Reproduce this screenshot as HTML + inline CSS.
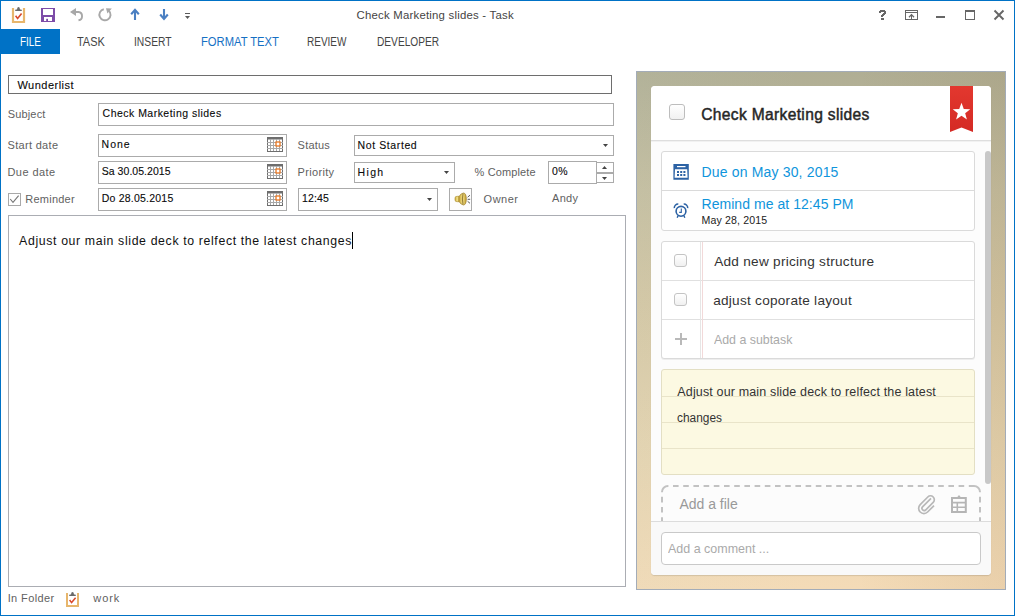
<!DOCTYPE html>
<html><head><meta charset="utf-8"><style>
html,body{margin:0;padding:0;}
body{width:1015px;height:616px;overflow:hidden;position:relative;background:#fff;font-family:'Liberation Sans',sans-serif;}
.a{position:absolute;box-sizing:border-box;}
.t{position:absolute;white-space:pre;}
svg{position:absolute;overflow:visible;}
</style></head><body>
<!-- window frame -->
<div class="a" style="left:0;top:0;width:1015px;height:616px;border:1px solid #0072c6;"></div>
<!-- FILE tab -->
<div class="a" style="left:0;top:29px;width:60px;height:25px;background:#0072c6;"></div>
<!-- form boxes -->
<div class="a" style="left:8px;top:75px;width:604px;height:19px;border:1px solid #6e6e6e;"></div>
<div class="a" style="left:98px;top:103px;width:516px;height:23px;border:1px solid #ababab;"></div>
<div class="a" style="left:98px;top:134px;width:189px;height:23px;border:1px solid #ababab;"></div>
<div class="a" style="left:98px;top:161px;width:189px;height:23px;border:1px solid #ababab;"></div>
<div class="a" style="left:98px;top:188px;width:189px;height:23px;border:1px solid #ababab;"></div>
<div class="a" style="left:354px;top:135px;width:260px;height:21px;border:1px solid #ababab;"></div>
<div class="a" style="left:354px;top:162px;width:101px;height:21px;border:1px solid #ababab;"></div>
<div class="a" style="left:548px;top:161px;width:49px;height:23px;border:1px solid #ababab;"></div>
<div class="a" style="left:596px;top:162px;width:18px;height:11px;border:1px solid #ababab;"></div>
<div class="a" style="left:596px;top:173px;width:18px;height:10px;border:1px solid #ababab;"></div>
<div class="a" style="left:298px;top:188px;width:140px;height:23px;border:1px solid #ababab;"></div>
<div class="a" style="left:449px;top:188px;width:23px;height:23px;border:1px solid #ababab;background:#fdfdfd;"></div>
<div class="a" style="left:8px;top:193px;width:13px;height:13px;border:1px solid #a9a9a9;"></div>
<div class="a" style="left:8px;top:215px;width:618px;height:372px;border:1px solid #abadb3;"></div>
<!-- cursor -->
<div class="a" style="left:352px;top:232px;width:1px;height:17px;background:#000;"></div>

<!-- Wunderlist panel -->
<div class="a" style="left:636px;top:71px;width:370px;height:519px;border:1px solid #a3acb8;background:linear-gradient(90deg,rgba(200,215,200,0.10) 0%,rgba(200,215,200,0) 45%,rgba(120,80,30,0) 60%,rgba(120,80,30,0.08) 100%),linear-gradient(180deg,#b0ae94 0%,#c4bd9f 23%,#d4c6a3 45%,#e5d3af 72%,#f4dbb7 100%);"></div>
<div class="a" style="left:651px;top:86px;width:340px;height:489px;background:#fcfcfc;border-radius:4px;box-shadow:0 1px 1px rgba(0,0,0,0.12);"></div>
<div class="a" style="left:651px;top:86px;width:340px;height:54px;background:#fff;border-radius:4px 4px 0 0;"></div>
<div class="a" style="left:651px;top:140px;width:340px;height:1px;background:#dedede;"></div>
<div class="a" style="left:651px;top:141px;width:340px;height:1px;background:#f1f1f1;"></div>
<!-- title checkbox -->
<div class="a" style="left:669px;top:104px;width:16px;height:16px;border:1px solid #bdbdbd;border-radius:3px;background:linear-gradient(#fff,#f1f1f1);"></div>
<!-- due box -->
<div class="a" style="left:661px;top:151px;width:314px;height:80px;border:1px solid #dadada;border-radius:3px;background:#fff;"></div>
<div class="a" style="left:662px;top:190px;width:312px;height:1px;background:#dadada;"></div>
<!-- subtasks -->
<div class="a" style="left:661px;top:241px;width:314px;height:118px;border:1px solid #dadada;border-radius:3px;background:#fff;box-shadow:0 1px 0 rgba(0,0,0,0.06);"></div>
<div class="a" style="left:662px;top:280px;width:312px;height:1px;background:#e0e0e0;"></div>
<div class="a" style="left:662px;top:319px;width:312px;height:1px;background:#e0e0e0;"></div>
<div class="a" style="left:700px;top:242px;width:1px;height:116px;background:#e6e6e6;"></div>
<div class="a" style="left:702px;top:242px;width:1px;height:116px;background:#f2d9d9;"></div>
<div class="a" style="left:674px;top:254px;width:13px;height:13px;border:1px solid #c4c4c4;border-radius:3px;background:linear-gradient(#fff,#f0f0f0);"></div>
<div class="a" style="left:674px;top:293px;width:13px;height:13px;border:1px solid #c4c4c4;border-radius:3px;background:linear-gradient(#fff,#f0f0f0);"></div>
<div class="a" style="left:680px;top:333px;width:2px;height:12px;background:#b9b9b9;"></div>
<div class="a" style="left:675px;top:338px;width:12px;height:2px;background:#b9b9b9;"></div>
<!-- note -->
<div class="a" style="left:661px;top:369px;width:314px;height:106px;border:1px solid #e3dfc4;border-radius:3px;background:#fcf9e2;"></div>
<div class="a" style="left:662px;top:396px;width:312px;height:1px;background:#e9e4c9;"></div>
<div class="a" style="left:662px;top:422px;width:312px;height:1px;background:#e9e4c9;"></div>
<div class="a" style="left:662px;top:448px;width:312px;height:1px;background:#e9e4c9;"></div>
<!-- scrollbar -->
<div class="a" style="left:985px;top:151px;width:6px;height:333px;background:#c8c8c8;border-radius:3px;"></div>
<!-- dashed file box -->
<svg style="left:0;top:0" width="1015" height="616" viewBox="0 0 1015 616">
<path d="M662 492 A6 6 0 0 1 668 486 M974 486 A6 6 0 0 1 980 492" fill="none" stroke="#c2c2c2" stroke-width="2"/>
<path d="M668 486 H974" fill="none" stroke="#c2c2c2" stroke-width="2" stroke-dasharray="5.6 4.6" stroke-dashoffset="5.2"/>
<path d="M662 492 V530 M980 492 V530" fill="none" stroke="#c2c2c2" stroke-width="2" stroke-dasharray="5.6 4.6" stroke-dashoffset="5.4"/>
</svg>
<!-- footer -->
<div class="a" style="left:651px;top:521px;width:340px;height:54px;background:#f9f9f9;border-top:1px solid #dcdcdc;border-radius:0 0 4px 4px;"></div>
<div class="a" style="left:661px;top:532px;width:320px;height:33px;border:1px solid #c9c9c9;border-radius:4px;background:#fff;"></div>
<svg style="left:0;top:0" width="1015" height="616" viewBox="0 0 1015 616">
<!-- title clipboard -->
<path d="M13 8 V22 H24 V8" fill="none" stroke="#e7b66c" stroke-width="2.2"/>
<path d="M15 11 L15.6 9.4 H17 Q17.2 7 18.5 7 Q19.8 7 20 9.4 H21.4 L22 11 Z" fill="#6a6a6a"/>
<path d="M15.6 15.8 L17.6 18.4 L21.6 13.4" fill="none" stroke="#d8492c" stroke-width="1.6"/>
<!-- save -->
<path d="M41 8 H55 V22 H41 Z M43 9 V15 H53 V9 Z M44 17 V21 H52 V17 Z" fill="#7d4ca8" fill-rule="evenodd"/>
<rect x="46.2" y="18.8" width="1.8" height="2.5" fill="#7d4ca8"/>
<!-- undo -->
<path d="M71.5 12 H78.5 A4.2 4.2 0 0 1 78.5 20.3" fill="none" stroke="#a8a8a8" stroke-width="1.9"/>
<path d="M70 12 L76 8 V16 Z" fill="#a8a8a8"/>
<!-- redo -->
<path d="M103.8 9.2 A5.6 5.6 0 1 0 108.8 10.6" fill="none" stroke="#a8a8a8" stroke-width="1.9"/>
<path d="M106 8.2 L111.8 8.6 L107.4 13.6 Z" fill="#a8a8a8"/>
<!-- up -->
<path d="M135 10 V20" stroke="#4a7fc2" stroke-width="2.1"/>
<path d="M131.2 14.2 L135 9.8 L138.8 14.2" fill="none" stroke="#4a7fc2" stroke-width="2.1"/>
<!-- down -->
<path d="M164 9 V19" stroke="#4a7fc2" stroke-width="2.1"/>
<path d="M160.2 14.5 L164 18.9 L167.8 14.5" fill="none" stroke="#4a7fc2" stroke-width="2.1"/>
<!-- customize -->
<rect x="185" y="13" width="5" height="1" fill="#5a5a5a"/>
<path d="M185 16 H190 L187.5 19 Z" fill="#5a5a5a"/>
<!-- help ? -->
<path d="M880 10 H885 V11 H886 V14 H885 V15 H884 V16 H883 V17 H881 V15 H882 V14 H883 V13 H884 V12 H881 V13 H879 V11 H880 Z" fill="#666"/>
<rect x="881" y="18" width="3" height="2" fill="#666"/>
<!-- ribbon display -->
<rect x="905.5" y="10.5" width="12" height="9" fill="none" stroke="#666" stroke-width="1"/>
<path d="M906 12.5 H917" stroke="#666" stroke-width="1"/>
<path d="M911.5 14.2 V19.5" stroke="#666" stroke-width="1"/>
<path d="M909 17.2 L911.5 14.6 L914 17.2" fill="none" stroke="#666" stroke-width="1.3"/>
<!-- minimize -->
<rect x="936" y="16" width="9" height="2" fill="#666"/>
<!-- maximize -->
<rect x="965.5" y="10.5" width="9" height="9" fill="none" stroke="#666" stroke-width="1"/>
<rect x="965" y="10" width="10" height="2" fill="#666"/>
<!-- close -->
<path d="M994.5 10.5 L1003.5 19.5 M1003.5 10.5 L994.5 19.5" stroke="#666" stroke-width="1.9"/>

<!-- calendar icons in date boxes -->
<g id="cal">
<rect x="267.5" y="137.5" width="15" height="14" fill="#fff" stroke="#6e6e6e" stroke-width="1"/>
<rect x="267" y="137" width="16" height="2.5" fill="#6e6e6e"/>
<path d="M270.5 139 V151 M273.5 139 V151 M276.5 139 V151 M279.5 139 V151 M267 142.5 H283 M267 145.5 H283 M267 148.5 H283" stroke="#a8a8a8" stroke-width="1"/>
<rect x="276" y="142" width="4" height="4" fill="#fff" stroke="#e87722" stroke-width="1.3"/>
</g>
<use href="#cal" x="0" y="27"/>
<use href="#cal" x="0" y="54"/>
<!-- dropdown arrows -->
<path d="M603 144 H608 L605.5 147 Z" fill="#444"/>
<path d="M444 171 H449 L446.5 174 Z" fill="#444"/>
<path d="M427 198 H432 L429.5 201 Z" fill="#444"/>
<!-- spinner arrows -->
<path d="M602 169 H607 L604.5 166 Z" fill="#444"/>
<path d="M602 177 H607 L604.5 180 Z" fill="#444"/>
<!-- speaker -->
<defs><linearGradient id="gold" x1="0" y1="0" x2="1" y2="0"><stop offset="0" stop-color="#c9a63a"/><stop offset="0.5" stop-color="#f3e38a"/><stop offset="1" stop-color="#c09a2e"/></linearGradient></defs>
<path d="M455 198 Q455 196.3 457 196.3 H459.5 V201.7 H457 Q455 201.7 455 200 Z" fill="url(#gold)" stroke="#a8892a" stroke-width="0.6"/>
<path d="M459 196.5 Q461 193.2 463.5 193 Q466.3 193.2 466.3 199 Q466.3 204.8 463.5 205 Q461 204.8 459 201.5 Z" fill="url(#gold)" stroke="#9c7d24" stroke-width="0.7"/>
<path d="M463 193.5 Q461.8 199 463 204.5" fill="none" stroke="#7a6020" stroke-width="0.8"/>
<path d="M467.6 197.2 L470 195.2 M467.6 199.3 H470.2 M467.6 201.3 L470 203.3" stroke="#333" stroke-width="0.8"/>
<!-- checkbox check -->
<path d="M10.2 199 L13 202.3 L18.6 195.6" fill="none" stroke="#777" stroke-width="1.1"/>
<!-- in folder clipboard -->
<path d="M67 593 V606 H78 V593" fill="none" stroke="#e7b66c" stroke-width="2"/>
<path d="M69 596 L69.6 594.4 H71 Q71.2 592 72.5 592 Q73.8 592 74 594.4 H75.4 L76 596 Z" fill="#6a6a6a"/>
<path d="M69.6 600 L71.6 602.6 L75.6 597.8" fill="none" stroke="#d8492c" stroke-width="1.5"/>

<!-- wunderlist ribbon -->
<defs><linearGradient id="rg" x1="0" y1="0" x2="0" y2="1"><stop offset="0" stop-color="#e3382f"/><stop offset="1" stop-color="#d42a24"/></linearGradient></defs>
<path d="M950 86 H973 V132 L961.5 127.5 L950 132 Z" fill="url(#rg)"/>
<path transform="translate(961.5,111.5) scale(1.08) translate(-961.5,-111.5)" d="M961.5 103.5 L963.6 109.2 L969.6 109.4 L964.9 113.1 L966.5 118.9 L961.5 115.5 L956.5 118.9 L958.1 113.1 L953.4 109.4 L959.4 109.2 Z" fill="#fff"/>
<!-- blue calendar -->
<path d="M673.4 164 H688.8 V179.8 H673.4 Z M675 169.2 L674.6 177.8 H687.6 L687.2 169.2 Z" fill="#2c62a4" fill-rule="evenodd"/>
<rect x="677" y="166" width="8.5" height="1.2" fill="#fff"/>
<path d="M677 172 H679 M680.2 172 H682.2 M683.4 172 H685.4 M677 175 H679 M680.2 175 H682.2 M683.4 175 H685.4" stroke="#2c62a4" stroke-width="1.9"/>
<!-- alarm -->
<circle cx="681" cy="211.3" r="4.9" fill="none" stroke="#2c62a4" stroke-width="1.6"/>
<path d="M681.3 208.6 V212.4 H679.2" fill="none" stroke="#2c62a4" stroke-width="1.1"/>
<path d="M674.3 208.2 A3.8 3.8 0 0 1 678.3 204 M687.7 208.2 A3.8 3.8 0 0 0 683.7 204" fill="none" stroke="#2c62a4" stroke-width="1.5"/>
<path d="M678 215.8 L677.2 217.8 M684 215.8 L684.8 217.8" stroke="#2c62a4" stroke-width="1.4"/>
<!-- paperclip -->
<g transform="translate(0,-1.6)">
<path d="M931 500 L922.5 508.5 A2.2 2.2 0 0 0 925.6 511.6 L933.2 504 A3.8 3.8 0 0 0 927.8 498.6 L920.2 506.2 A5.2 5.2 0 0 0 927.6 513.6 L934 507.2" fill="none" stroke="#b8b8b8" stroke-width="1.7"/>
</g>
<!-- file clipboard -->
<path d="M952 498 H965.8 V512 H952 Z" fill="none" stroke="#b5b5b5" stroke-width="2"/>
<path d="M957 497.5 L959 495 L961 497.5 Z" fill="#b5b5b5"/>
<path d="M952 502.6 H966 M952 507.2 H966 M957.3 502 V512" stroke="#b5b5b5" stroke-width="1.6"/>
</svg>

<div class="t" style="left:356.50px;top:10.20px;font:normal 11.4px/11.4px 'Liberation Sans';color:#444;letter-spacing:0.214px;">Check Marketing slides - Task</div>
<div class="t" style="left:19.59px;top:35.80px;font:normal 12.3px/12.3px 'Liberation Sans';color:#fff;letter-spacing:0.000px;transform:scaleX(0.8080);transform-origin:0 0;">FILE</div>
<div class="t" style="left:77.30px;top:35.80px;font:normal 12.3px/12.3px 'Liberation Sans';color:#444;letter-spacing:0.000px;transform:scaleX(0.8903);transform-origin:0 0;">TASK</div>
<div class="t" style="left:133.66px;top:35.80px;font:normal 12.3px/12.3px 'Liberation Sans';color:#444;letter-spacing:0.000px;transform:scaleX(0.8364);transform-origin:0 0;">INSERT</div>
<div class="t" style="left:200.59px;top:35.80px;font:normal 12.3px/12.3px 'Liberation Sans';color:#1570c4;letter-spacing:0.000px;transform:scaleX(0.9119);transform-origin:0 0;">FORMAT TEXT</div>
<div class="t" style="left:307.49px;top:35.80px;font:normal 12.3px/12.3px 'Liberation Sans';color:#444;letter-spacing:0.000px;transform:scaleX(0.8125);transform-origin:0 0;">REVIEW</div>
<div class="t" style="left:376.77px;top:35.80px;font:normal 12.3px/12.3px 'Liberation Sans';color:#444;letter-spacing:0.000px;transform:scaleX(0.8257);transform-origin:0 0;">DEVELOPER</div>
<div class="t" style="left:17.40px;top:79.90px;font:normal 11px/11px 'Liberation Sans';color:#0a0a0a;letter-spacing:0.489px;-webkit-text-stroke:0.1px #000;">Wunderlist</div>
<div class="t" style="left:7.70px;top:108.60px;font:normal 11px/11px 'Liberation Sans';color:#5f5f5f;letter-spacing:0.167px;">Subject</div>
<div class="t" style="left:102.60px;top:107.80px;font:normal 10.5px/10.5px 'Liberation Sans';color:#0a0a0a;letter-spacing:0.476px;-webkit-text-stroke:0.1px #000;">Check Marketing slides</div>
<div class="t" style="left:7.50px;top:140.00px;font:normal 11px/11px 'Liberation Sans';color:#5f5f5f;letter-spacing:0.311px;">Start date</div>
<div class="t" style="left:101.60px;top:139.00px;font:normal 10.5px/10.5px 'Liberation Sans';color:#0a0a0a;letter-spacing:1.000px;-webkit-text-stroke:0.1px #000;">None</div>
<div class="t" style="left:297.60px;top:139.60px;font:normal 11px/11px 'Liberation Sans';color:#5f5f5f;letter-spacing:0.200px;">Status</div>
<div class="t" style="left:357.60px;top:139.90px;font:normal 10.5px/10.5px 'Liberation Sans';color:#0a0a0a;letter-spacing:0.600px;-webkit-text-stroke:0.1px #000;">Not Started</div>
<div class="t" style="left:7.50px;top:167.00px;font:normal 11px/11px 'Liberation Sans';color:#5f5f5f;letter-spacing:0.429px;">Due date</div>
<div class="t" style="left:101.70px;top:165.80px;font:normal 10.5px/10.5px 'Liberation Sans';color:#0a0a0a;letter-spacing:0.050px;-webkit-text-stroke:0.1px #000;">Sa 30.05.2015</div>
<div class="t" style="left:297.60px;top:166.80px;font:normal 11px/11px 'Liberation Sans';color:#5f5f5f;letter-spacing:0.329px;">Priority</div>
<div class="t" style="left:357.60px;top:166.90px;font:normal 10.5px/10.5px 'Liberation Sans';color:#0a0a0a;letter-spacing:1.333px;-webkit-text-stroke:0.1px #000;">High</div>
<div class="t" style="left:474.60px;top:166.90px;font:normal 11px/11px 'Liberation Sans';color:#5f5f5f;letter-spacing:0.111px;">% Complete</div>
<div class="t" style="left:552.00px;top:166.00px;font:normal 10.5px/10.5px 'Liberation Sans';color:#0a0a0a;letter-spacing:0.300px;-webkit-text-stroke:0.1px #000;">0%</div>
<div class="t" style="left:25.30px;top:193.80px;font:normal 11px/11px 'Liberation Sans';color:#5f5f5f;letter-spacing:0.229px;">Reminder</div>
<div class="t" style="left:101.70px;top:192.70px;font:normal 10.5px/10.5px 'Liberation Sans';color:#0a0a0a;letter-spacing:0.225px;-webkit-text-stroke:0.1px #000;">Do 28.05.2015</div>
<div class="t" style="left:302.10px;top:192.70px;font:normal 10.5px/10.5px 'Liberation Sans';color:#0a0a0a;letter-spacing:0.125px;-webkit-text-stroke:0.1px #000;">12:45</div>
<div class="t" style="left:483.60px;top:194.00px;font:normal 11px/11px 'Liberation Sans';color:#5f5f5f;letter-spacing:0.500px;">Owner</div>
<div class="t" style="left:552.00px;top:193.00px;font:normal 11px/11px 'Liberation Sans';color:#5f5f5f;letter-spacing:0.333px;">Andy</div>
<div class="t" style="left:19.10px;top:234.90px;font:normal 12.3px/12.3px 'Liberation Sans';color:#111;letter-spacing:0.636px;">Adjust our main slide deck to relfect the latest changes</div>
<div class="t" style="left:7.70px;top:592.90px;font:normal 11px/11px 'Liberation Sans';color:#5f5f5f;letter-spacing:0.375px;">In Folder</div>
<div class="t" style="left:93.30px;top:593.00px;font:normal 11px/11px 'Liberation Sans';color:#5f5f5f;letter-spacing:0.900px;">work</div>
<div class="t" style="left:701.20px;top:106.90px;font:normal 15.6px/15.6px 'Liberation Sans';color:#262626;letter-spacing:0.333px;-webkit-text-stroke:0.45px #262626;">Check Marketing slides</div>
<div class="t" style="left:701.50px;top:164.80px;font:normal 14px/14px 'Liberation Sans';color:#0f95dc;letter-spacing:0.167px;">Due on May 30, 2015</div>
<div class="t" style="left:701.50px;top:196.60px;font:normal 14px/14px 'Liberation Sans';color:#0f95dc;letter-spacing:0.050px;">Remind me at 12:45 PM</div>
<div class="t" style="left:701.50px;top:214.70px;font:normal 10.6px/10.6px 'Liberation Sans';color:#222;letter-spacing:0.136px;">May 28, 2015</div>
<div class="t" style="left:714.20px;top:254.70px;font:normal 13.6px/13.6px 'Liberation Sans';color:#333;letter-spacing:0.275px;">Add new pricing structure</div>
<div class="t" style="left:713.20px;top:293.50px;font:normal 13.6px/13.6px 'Liberation Sans';color:#333;letter-spacing:0.262px;">adjust coporate layout</div>
<div class="t" style="left:714.00px;top:332.50px;font:normal 13px/13px 'Liberation Sans';color:#aaa;letter-spacing:0.000px;transform:scaleX(0.9512);transform-origin:0 0;">Add a subtask</div>
<div class="t" style="left:677.30px;top:386.00px;font:normal 12.5px/12.5px 'Liberation Sans';color:#333;letter-spacing:0.149px;">Adjust our main slide deck to relfect the latest</div>
<div class="t" style="left:677.30px;top:412.00px;font:normal 12.5px/12.5px 'Liberation Sans';color:#333;letter-spacing:0.000px;transform:scaleX(0.9511);transform-origin:0 0;">changes</div>
<div class="t" style="left:679.40px;top:496.60px;font:normal 14px/14px 'Liberation Sans';color:#999;letter-spacing:0.000px;">Add a file</div>
<div class="t" style="left:668.30px;top:542.80px;font:normal 12.8px/12.8px 'Liberation Sans';color:#aaa;letter-spacing:0.000px;transform:scaleX(0.9748);transform-origin:0 0;">Add a comment ...</div>
</body></html>
